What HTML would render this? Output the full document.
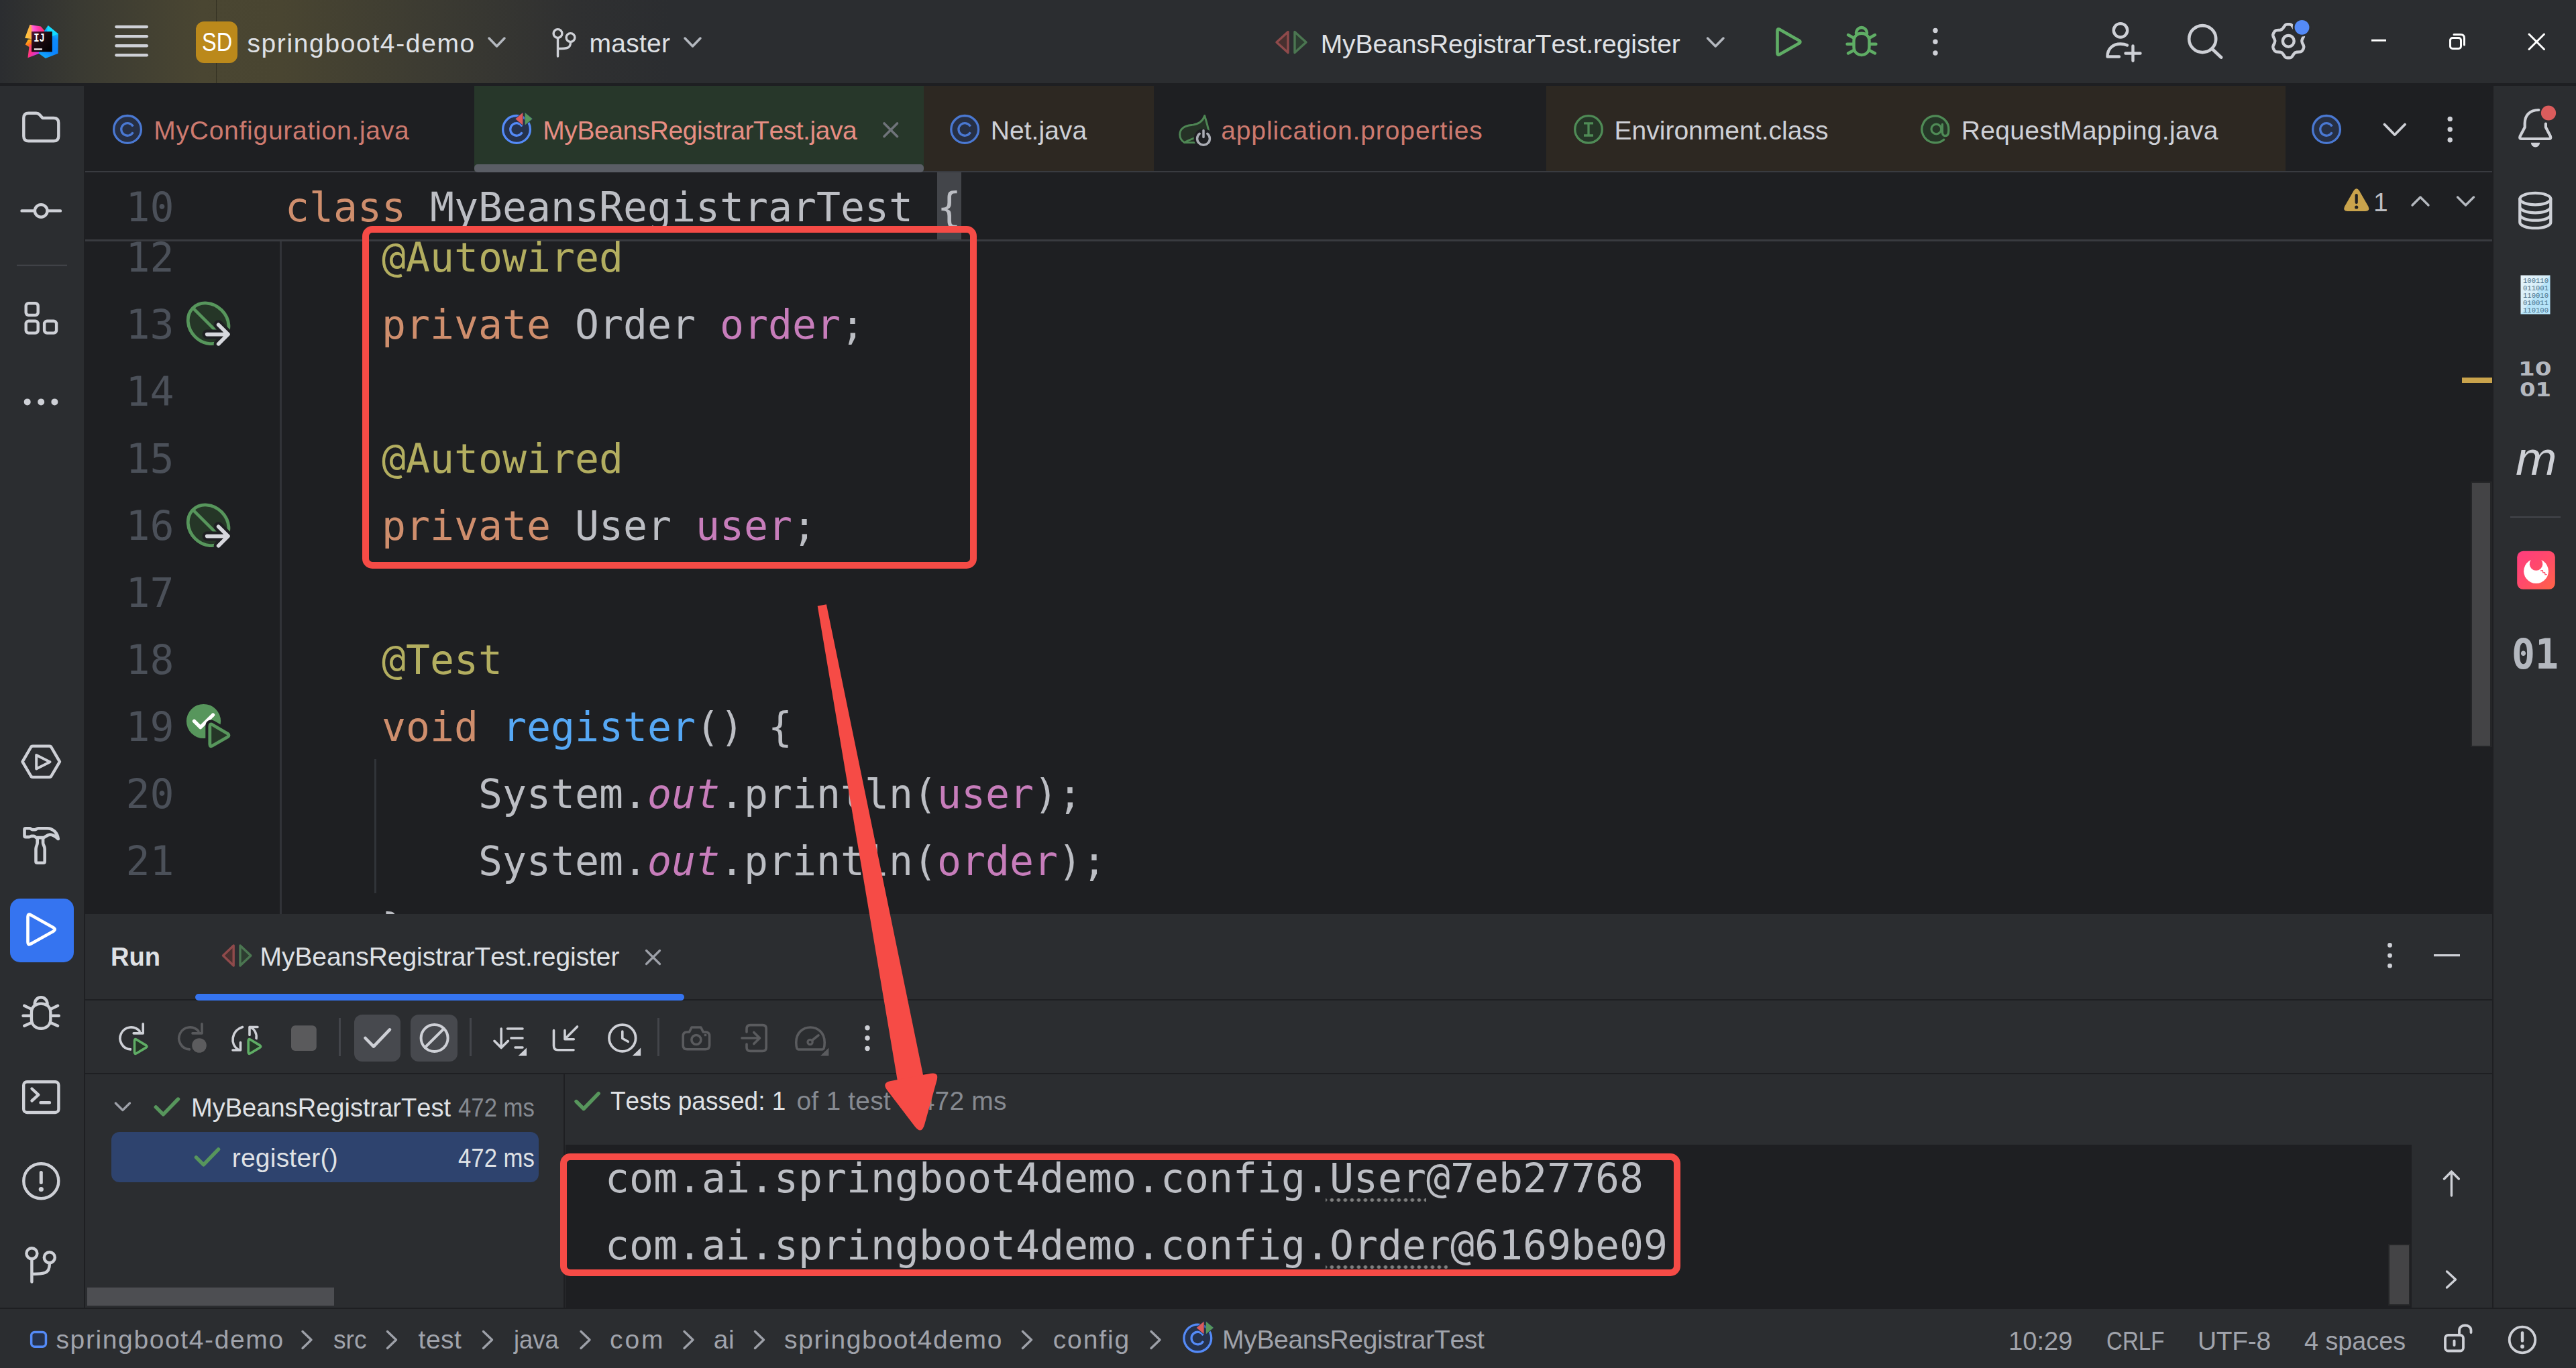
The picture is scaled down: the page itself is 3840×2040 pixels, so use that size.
<!DOCTYPE html>
<html lang="en"><head><meta charset="utf-8"><title>springboot4-demo – MyBeansRegistrarTest.java</title>
<style>
html,body{margin:0;padding:0}
body{width:3840px;height:2040px;position:relative;overflow:hidden;background:#1e1f22}
.r{position:absolute}
.i{position:absolute;overflow:visible}
.t{position:absolute;white-space:pre;line-height:1;font-kerning:none}

.cl{position:absolute;left:425px;height:100px;line-height:100px;white-space:pre;font-family:"DejaVu Sans Mono", "Liberation Mono", monospace;font-size:59.8px;color:#bcbec4;font-kerning:none}
.ln{position:absolute;left:115.5px;width:144px;text-align:right;height:100px;line-height:100px;white-space:pre;font-family:"DejaVu Sans Mono", "Liberation Mono", monospace;font-size:59.8px;color:#4b5059}
.k{color:#cf8e6d}.a{color:#b3ae60}.f{color:#c77dbb}.m{color:#56a8f5}.fi{color:#c77dbb;font-style:italic}
.clip{position:absolute;overflow:hidden}
</style></head>
<body>
<div class="r" style="left:0px;top:0px;width:3840px;height:124px;background:linear-gradient(90deg,#2b2d30 0px,#3a3a32 120px,#4a4632 300px,#494531 420px,#3c3b32 640px,#2f3031 860px,#2b2d30 1000px);"></div>
<div class="r" style="left:322px;top:0px;width:1px;height:124px;background:rgba(0,0,0,.28);"></div>
<div class="r" style="left:0px;top:128px;width:125px;height:1824px;background:#2b2d30;"></div>
<div class="r" style="left:3717px;top:128px;width:123px;height:1824px;background:#2b2d30;"></div>
<div class="r" style="left:126px;top:128px;width:581px;height:127.2px;background:#1e1f22;"></div>
<div class="r" style="left:707px;top:128px;width:670.3px;height:127.2px;background:#27372a;"></div>
<div class="r" style="left:1377px;top:128px;width:343px;height:127.2px;background:#2d2822;"></div>
<div class="r" style="left:1720px;top:128px;width:585px;height:127.2px;background:#1e1f22;"></div>
<div class="r" style="left:2305px;top:128px;width:1102px;height:127.2px;background:#2d2822;"></div>
<div class="r" style="left:3407px;top:128px;width:308px;height:127.2px;background:#1e1f22;"></div>
<div class="r" style="left:127px;top:255.2px;width:3588px;height:2px;background:#393b40;"></div>
<div class="r" style="left:707px;top:245px;width:670.3px;height:12.2px;background:#5a5d65;border-radius:5px"></div>
<div class="r" style="left:127px;top:357px;width:3588px;height:2.8px;background:#393b40;"></div>
<div class="r" style="left:1397px;top:257.2px;width:36px;height:100px;background:#43454a;"></div>
<div class="r" style="left:417px;top:359.8px;width:3px;height:1003.2px;background:#313338;"></div>
<div class="r" style="left:558px;top:1132px;width:3px;height:200px;background:#313439;"></div>
<div class="r" style="left:3683px;top:718px;width:31.6px;height:396px;background:#252628;"></div>
<div class="r" style="left:3685px;top:720px;width:27px;height:392px;background:#444446;"></div>
<div class="r" style="left:3670px;top:563px;width:45px;height:8px;background:#c9a34c;"></div>
<div class="r" style="left:126px;top:1363px;width:3589px;height:589px;background:#2b2d30;"></div>
<div class="r" style="left:126px;top:1490px;width:3589px;height:2.2px;background:#1e1f22;"></div>
<div class="r" style="left:126px;top:1600px;width:3589px;height:2.2px;background:#1e1f22;"></div>
<div class="r" style="left:840px;top:1602px;width:2.2px;height:350px;background:#1e1f22;"></div>
<div class="r" style="left:843px;top:1707px;width:2752px;height:244px;background:#1e1f22;"></div>
<div class="r" style="left:3559.5px;top:1855px;width:33px;height:92px;background:#252628;"></div>
<div class="r" style="left:3561.5px;top:1857px;width:29px;height:88px;background:#444446;"></div>
<div class="r" style="left:291px;top:1482px;width:729px;height:10px;background:#3574f0;border-radius:5px"></div>
<div class="r" style="left:527.6px;top:1512.5px;width:69.6px;height:70px;background:#47494e;border-radius:12px"></div>
<div class="r" style="left:612.4px;top:1512.5px;width:69.6px;height:70px;background:#47494e;border-radius:12px"></div>
<div class="r" style="left:505.2px;top:1518px;width:2.8px;height:57px;background:#43454a;"></div>
<div class="r" style="left:699.8px;top:1518px;width:2.8px;height:57px;background:#43454a;"></div>
<div class="r" style="left:979.9px;top:1518px;width:2.8px;height:57px;background:#43454a;"></div>
<div class="r" style="left:166px;top:1688px;width:637px;height:75px;background:#2e436e;border-radius:12px"></div>
<div class="r" style="left:130px;top:1920px;width:368px;height:27px;background:#4d4e52;"></div>
<div class="r" style="left:0px;top:1952px;width:3840px;height:88px;background:#2b2d30;"></div>
<div class="r" style="left:0px;top:1950px;width:3840px;height:2px;background:#1e1f22;"></div>
<div class="r" style="left:125px;top:128px;width:2px;height:1822px;background:#1e1f22;"></div>
<div class="r" style="left:3715px;top:128px;width:2px;height:1822px;background:#1e1f22;"></div>
<div class="r" style="left:1975.7px;top:1786.8px;width:150.6px;height:5.5px;background:radial-gradient(circle at 5px 2.75px,#808080 2.4px,rgba(128,128,128,0) 3.1px) -5.6px 0/10px 5.5px repeat-x;"></div>
<div class="r" style="left:1975.7px;top:1886.8px;width:182.5px;height:5.5px;background:radial-gradient(circle at 5px 2.75px,#808080 2.4px,rgba(128,128,128,0) 3.1px) -5.6px 0/10px 5.5px repeat-x;"></div>
<div class="clip" style="left:126px;top:359px;width:3559px;height:1004px"><div style="position:absolute;left:-126px;top:-359px">
<div class="ln" style="top:334.3px">12</div><div class="cl" style="top:334.3px">    <span class="a">@Autowired</span></div>
<div class="ln" style="top:434.3px">13</div><div class="cl" style="top:434.3px">    <span class="k">private</span> Order <span class="f">order</span>;</div>
<div class="ln" style="top:534.3px">14</div><div class="cl" style="top:534.3px"></div>
<div class="ln" style="top:634.3px">15</div><div class="cl" style="top:634.3px">    <span class="a">@Autowired</span></div>
<div class="ln" style="top:734.3px">16</div><div class="cl" style="top:734.3px">    <span class="k">private</span> User <span class="f">user</span>;</div>
<div class="ln" style="top:834.3px">17</div><div class="cl" style="top:834.3px"></div>
<div class="ln" style="top:934.3px">18</div><div class="cl" style="top:934.3px">    <span class="a">@Test</span></div>
<div class="ln" style="top:1034.3px">19</div><div class="cl" style="top:1034.3px">    <span class="k">void</span> <span class="m">register</span>() {</div>
<div class="ln" style="top:1134.3px">20</div><div class="cl" style="top:1134.3px">        System.<span class="fi">out</span>.println(<span class="f">user</span>);</div>
<div class="ln" style="top:1234.3px">21</div><div class="cl" style="top:1234.3px">        System.<span class="fi">out</span>.println(<span class="f">order</span>);</div>
<div class="cl" style="top:1334.3px">    }</div>
</div></div>
<div class="ln" style="top:259.3px">10</div><div class="cl" style="top:259.3px"><span class="k">class</span> MyBeansRegistrarTest {</div>
<div class="cl" style="left:902px;top:1707px">com.ai.springboot4demo.config.User@7eb27768</div>
<div class="cl" style="left:902px;top:1807px">com.ai.springboot4demo.config.Order@6169be09</div>

<svg class="i" style="left:0;top:0" width="3840" height="2040" viewBox="0 0 3840 2040" fill="none" stroke-linecap="round" stroke-linejoin="round">
<defs><linearGradient id="ij1" x1="0" y1="0.5" x2="1" y2="0.4"><stop offset="0" stop-color="#ffc83a"/><stop offset="0.3" stop-color="#ffb04a"/><stop offset="0.45" stop-color="#ff5ae0"/><stop offset="0.7" stop-color="#ff3aa8"/><stop offset="1" stop-color="#ff2d6e"/></linearGradient><linearGradient id="ij2" x1="0.2" y1="0" x2="0.6" y2="1"><stop offset="0" stop-color="#ffd21a"/><stop offset="0.5" stop-color="#ff7a1c"/><stop offset="1" stop-color="#ff5548"/></linearGradient><linearGradient id="ij3" x1="0" y1="0" x2="1" y2="0.6"><stop offset="0" stop-color="#ff5a4a"/><stop offset="0.5" stop-color="#ff2f8e"/><stop offset="1" stop-color="#c03cf0"/></linearGradient><linearGradient id="ij4" x1="0.7" y1="0" x2="0.4" y2="1"><stop offset="0" stop-color="#12e2ff"/><stop offset="0.35" stop-color="#0d8bfa"/><stop offset="0.75" stop-color="#0a84ff"/><stop offset="1" stop-color="#14a8fb"/></linearGradient><linearGradient id="ij5" x1="0" y1="0" x2="1" y2="1"><stop offset="0" stop-color="#5a1236"/><stop offset="0.45" stop-color="#1a0a10"/><stop offset="1" stop-color="#000000"/></linearGradient></defs>
<g stroke="none"><polygon points="44.5,36.8 61,39.6 66.3,45.8 60,60 37.1,56.7" fill="url(#ij1)"/><polygon points="41.8,59 50,58 50,74 37.7,66.6" fill="url(#ij2)"/><polygon points="44,66 58.5,70 58.5,79.7 41.4,86.2" fill="url(#ij3)"/><polygon points="66.3,45.8 71.6,38 86.8,50.5 86.5,79.7 67.9,87.1 57.9,79.7 60,60" fill="url(#ij4)"/><polygon points="71.6,38 86.8,50.5 78,54 70,47" fill="#14dcff"/><rect x="47" y="47" width="30.8" height="30.3" fill="url(#ij5)"/><rect x="50.8" y="72.2" width="12.1" height="2.5" fill="#ede4e6"/><text x="50.3" y="62.3" font-family="Liberation Mono, monospace" font-weight="700" font-size="17.5" fill="#fff" textLength="16.5" lengthAdjust="spacingAndGlyphs">IJ</text></g>
<path d="M173.5 40 H218.7" stroke="#ced0d6" stroke-width="4.6" fill="none" />
<path d="M173.5 54.2 H218.7" stroke="#ced0d6" stroke-width="4.6" fill="none" />
<path d="M173.5 68.3 H218.7" stroke="#ced0d6" stroke-width="4.6" fill="none" />
<path d="M173.5 82.3 H218.7" stroke="#ced0d6" stroke-width="4.6" fill="none" />
<defs><linearGradient id="sdg" x1="0" y1="0" x2="1" y2="1"><stop offset="0" stop-color="#b88a1c"/><stop offset="1" stop-color="#c0861a"/></linearGradient></defs>
<rect x="292" y="32" width="62" height="62" rx="12" fill="#bb891b" stroke="none"/>
<path d="M729 57 L740.5 69 L752 57" stroke="#b4b8bf" stroke-width="3.5" fill="none" />
<circle cx="831.5" cy="50" r="6.4" stroke="#ced0d6" stroke-width="3.4" fill="none" />
<circle cx="850.5" cy="56" r="6.4" stroke="#ced0d6" stroke-width="3.4" fill="none" />
<path d="M831.5 57 V84 M850.5 63 C850.5 72 846 72.5 831.5 72.5" stroke="#ced0d6" stroke-width="3.4" fill="none" />
<path d="M1021 57 L1032.5 69 L1044 57" stroke="#b4b8bf" stroke-width="3.5" fill="none" />
<path d="M1920 47.5 L1903 63 L1920 78.5 Z" stroke="#8f4a4b" stroke-width="3.4" fill="#48302f" />
<path d="M1930 47.5 L1947 63 L1930 78.5 Z" stroke="#4b7651" stroke-width="3.4" fill="#2d3d31" />
<path d="M2545.5 57 L2557.25 69 L2569 57" stroke="#b4b8bf" stroke-width="3.5" fill="none" />
<path d="M2649.5 46 V79 Q2649.5 83 2653 81 L2682 64.5 Q2685 62.5 2682 60.5 L2653 44 Q2649.5 42 2649.5 46 Z" stroke="#5fad65" stroke-width="4.6" fill="none" />
<path d="M2763.5 61 C2763.5 46 2786.5 46 2786.5 61 V70 C2786.5 86 2763.5 86 2763.5 70 Z" stroke="#5fad65" stroke-width="4.4" fill="none" />
<path d="M2767 50 C2767 38 2783 38 2783 50" stroke="#5fad65" stroke-width="4.4" fill="none" />
<path d="M2753.5 65.8 H2762 M2788 65.8 H2796.5 M2755 52 L2763 56.5 M2795 52 L2787 56.5 M2755 79.5 L2763.5 75 M2795 79.5 L2786.5 75" stroke="#5fad65" stroke-width="4.4" fill="none" />
<circle cx="2885" cy="45.5" r="3.7" fill="#ced0d6"/>
<circle cx="2885" cy="62.2" r="3.7" fill="#ced0d6"/>
<circle cx="2885" cy="79" r="3.7" fill="#ced0d6"/>
<circle cx="3161" cy="45.3" r="10.2" stroke="#ced0d6" stroke-width="4.4" fill="none" />
<path d="M3141.5 84.5 C3141.5 72 3150 65.5 3161 65.5 C3165 65.5 3168 66 3171 67.5 M3141.5 84.5 H3159" stroke="#ced0d6" stroke-width="4.4" fill="none" />
<path d="M3168.5 79.5 H3190.5 M3179.5 68.5 V90.5" stroke="#ced0d6" stroke-width="4.4" fill="none" />
<circle cx="3283.2" cy="58.1" r="20" stroke="#ced0d6" stroke-width="4.6" fill="none" />
<path d="M3298 73.3 L3311 85.5" stroke="#ced0d6" stroke-width="4.8" fill="none" />
<path d="M3416.8 38.3 Q3415.3 36.2 3412.7 36.2 L3409.9 36.2 Q3407.3 36.2 3405.8 38.3 L3403.1 42.3 Q3401.6 44.4 3399.0 44.7 L3394.2 45.1 Q3391.6 45.3 3390.3 47.5 L3388.9 49.9 Q3387.6 52.1 3388.7 54.5 L3390.8 58.9 Q3391.9 61.2 3390.8 63.6 L3388.7 68.0 Q3387.6 70.4 3388.9 72.6 L3390.3 75.0 Q3391.6 77.2 3394.2 77.4 L3399.0 77.8 Q3401.6 78.1 3403.1 80.2 L3405.8 84.2 Q3407.3 86.3 3409.9 86.3 L3412.7 86.3 Q3415.3 86.3 3416.8 84.2 L3419.5 80.2 Q3421.0 78.1 3423.6 77.8 L3428.4 77.4 Q3431.0 77.2 3432.3 75.0 L3433.7 72.6 Q3435.0 70.4 3433.9 68.0 L3431.8 63.6 Q3430.7 61.3 3431.8 58.9 L3433.9 54.5 Q3435.0 52.1 3433.7 49.9 L3432.3 47.5 Q3431.0 45.3 3428.4 45.1 L3423.6 44.7 Q3421.0 44.4 3419.5 42.3 Z" stroke="#ced0d6" stroke-width="4.4" fill="none" />
<circle cx="3411.3" cy="61.3" r="8.4" stroke="#ced0d6" stroke-width="4.4" fill="none" />
<circle cx="3431.5" cy="40.8" r="13.8" fill="#2b2d30"/><circle cx="3431.5" cy="40.8" r="10.9" fill="#548af7"/>
<path d="M3535 60.2 H3557" stroke="#ffffff" stroke-width="3" fill="none" stroke-linecap="butt"/>
<rect x="3652.5" y="56.5" width="16" height="16" rx="3.5" stroke="#fff" stroke-width="3"/>
<path d="M3658 51.5 H3668 Q3673.5 51.5 3673.5 57 V67" stroke="#ffffff" stroke-width="3" fill="none" />
<path d="M3770 51 L3792.5 73.5 M3792.5 51 L3770 73.5" stroke="#ffffff" stroke-width="3" fill="none" />
<circle cx="190" cy="192.9" r="20.4" stroke="#4a78d2" stroke-width="3.3" fill="#262f44" />
<path d="M198.3 188.6 A9.3 9.3 0 1 0 198.3 197.20000000000002" stroke="#4a78d2" stroke-width="3.3" fill="none" stroke-linecap="butt"/>
<circle cx="770" cy="192.9" r="20.4" stroke="#548af7" stroke-width="3.3" fill="#25324d" />
<path d="M778.3 188.6 A9.3 9.3 0 1 0 778.3 197.20000000000002" stroke="#548af7" stroke-width="3.3" fill="none" stroke-linecap="butt"/>
<path d="M779.3 168.0 L768.3 177.3 L779.3 186.5 Z" fill="#db5c5c" stroke="#25324d" stroke-width="1.6" stroke-linejoin="miter"/>
<path d="M782.6 168.0 L793.6 177.3 L782.6 186.5 Z" fill="#57965c" stroke="#25324d" stroke-width="1.6" stroke-linejoin="miter"/>
<path d="M779.3 168.0 L768.3 177.3 L779.3 186.5 Z" fill="#db5c5c"/>
<path d="M782.6 168.0 L793.6 177.3 L782.6 186.5 Z" fill="#57965c"/>
<circle cx="1438.2" cy="192.9" r="20.4" stroke="#4a78d2" stroke-width="3.3" fill="#262f44" />
<path d="M1446.5 188.6 A9.3 9.3 0 1 0 1446.5 197.20000000000002" stroke="#4a78d2" stroke-width="3.3" fill="none" stroke-linecap="butt"/>
<circle cx="3468" cy="192.9" r="20.4" stroke="#4a78d2" stroke-width="3.3" fill="#262f44" />
<path d="M3476.3 188.6 A9.3 9.3 0 1 0 3476.3 197.20000000000002" stroke="#4a78d2" stroke-width="3.3" fill="none" stroke-linecap="butt"/>
<path d="M1318 184 L1337.5 203.5 M1337.5 184 L1318 203.5" stroke="#6f737a" stroke-width="3.6" fill="none" />
<path d="M1795.7 172.5 C1793 181 1786 185.5 1776 186.5 C1766 187.5 1758.7 192 1758.7 200.5 C1758.7 206 1761.5 210 1765.5 212.5 H1790 L1801.8 195 C1800.5 188 1798 180 1795.7 172.5 Z" fill="#253226"/>
<path d="M1783 212.6 H1765.5 C1761.5 210 1758.7 206 1758.7 200.5 C1758.7 192 1766 187.5 1776 186.5 C1786 185.5 1793 181 1795.7 172.5 C1798 180 1800.5 188 1801.8 195.5 M1765.5 212.5 C1770 210 1775 207.8 1780.5 205.8" stroke="#4e8654" stroke-width="2.9" fill="none" />
<circle cx="1794" cy="206.3" r="14.3" fill="#1e1f22"/>
<path d="M1788.2 199.4 A9.4 9.4 0 1 0 1799.8 199.4 M1794 194.6 V204.4" stroke="#aaacb4" stroke-width="3.5" fill="none" />
<circle cx="2368" cy="192.9" r="20.3" stroke="#4f8b56" stroke-width="3.3" fill="#253627" />
<path d="M2361 183.8 H2375 M2368 183.8 V202 M2361 202 H2375" stroke="#4f8b56" stroke-width="3.3" fill="none" stroke-linecap="butt"/>
<circle cx="2884.8" cy="192.9" r="20" fill="#253627"/>
<path d="M2897.7000000000003 208.20000000000002 A20 20 0 1 1 2904.8 194.4 C2904.8 199.9 2902.6000000000004 202.5 2900.0 202.5 C2897.0 202.5 2895.4 200.4 2895.4 196.9 V185.3" stroke="#4f8b56" stroke-width="3.3" fill="none" />
<circle cx="2886.4" cy="192.5" r="7.4" stroke="#4f8b56" stroke-width="3.2" fill="none" />
<path d="M3554.5 185.5 L3569.75 201 L3585 185.5" stroke="#ced0d6" stroke-width="3.8" fill="none" />
<circle cx="3652.2" cy="177.4" r="3.7" fill="#ced0d6"/>
<circle cx="3652.2" cy="193" r="3.7" fill="#ced0d6"/>
<circle cx="3652.2" cy="208.7" r="3.7" fill="#ced0d6"/>
<path d="M3508.5 284.5 Q3512.7 278 3517 284.5 L3530.5 308 Q3533.5 315 3526 315 H3499.5 Q3492 315 3495 308 Z" fill="#c9a34c" stroke="none"/>
<path d="M3512.7 291 V302" stroke="#1e1f22" stroke-width="4.2" fill="none" />
<circle cx="3512.7" cy="309" r="2.6" fill="#1e1f22"/>
<path d="M3596 306 L3608 294 L3620 306" stroke="#b4b8bf" stroke-width="3.4" fill="none" />
<path d="M3663.5 294 L3675.5 306 L3687.5 294" stroke="#b4b8bf" stroke-width="3.4" fill="none" />
<path d="M35.3 176 Q35.3 168.7 42.6 168.7 H54 Q57 168.7 59 171 L63.5 176 H80 Q87.3 176 87.3 183.3 V203 Q87.3 210.3 80 210.3 H42.6 Q35.3 210.3 35.3 203 Z" stroke="#ced0d6" stroke-width="4.4" fill="none" />
<circle cx="61.2" cy="314.4" r="9.3" stroke="#ced0d6" stroke-width="4.4" fill="none" />
<path d="M32.5 314.4 H51.5 M71 314.4 H90" stroke="#ced0d6" stroke-width="4.4" fill="none" />
<rect x="25" y="394.7" width="75" height="2" fill="#43454a"/>
<rect x="38.7" y="452.2" width="18" height="17.8" rx="4" stroke="#ced0d6" stroke-width="4.4"/>
<rect x="38.7" y="478.8" width="18" height="17.8" rx="4" stroke="#ced0d6" stroke-width="4.4"/>
<rect x="66.1" y="478.8" width="18" height="17.8" rx="4" stroke="#ced0d6" stroke-width="4.4"/>
<circle cx="40.7" cy="599.4" r="5" fill="#ced0d6"/>
<circle cx="61.2" cy="599.4" r="5" fill="#ced0d6"/>
<circle cx="81.4" cy="599.4" r="5" fill="#ced0d6"/>
<path d="M33.5 1135.8 L46.5 1113.5 Q47.5 1112.6 49 1112.6 H73.5 Q75 1112.6 76 1113.5 L89 1135.8 L76 1158 Q75 1158.9 73.5 1158.9 H49 Q47.5 1158.9 46.5 1158 Z" stroke="#ced0d6" stroke-width="4.4" fill="none" />
<path d="M54.2 1126 V1146.5 L74.5 1136.2 Z" stroke="#ced0d6" stroke-width="4" fill="none" />
<path d="M36.5 1237 Q36.5 1235.3 38.2 1235.3 H44 C46 1235.3 46.5 1237.2 48.5 1237.2 H52 C54 1237.2 54.5 1235.2 57 1235.2 H70.5 C79 1235.2 85.5 1242 86.8 1251 C82 1246.5 78 1244.6 74.5 1244.6 C70 1244.6 67.5 1249.1 64.5 1249.1 H54.5 C52.5 1249.1 52.5 1246.9 50.5 1246.9 H47 C45.5 1246.9 45.5 1248.1 43.5 1248.1 H38.2 Q36.5 1248.1 36.5 1246.4 Z" stroke="#ced0d6" stroke-width="4.6" fill="none" />
<path d="M55.7 1249.5 V1257 C55.7 1260 53.5 1262 53.5 1266 V1284.5 Q53.5 1286.8 55.8 1286.8 H64.4 Q66.7 1286.8 66.7 1284.5 V1266 C66.7 1262 64.1 1260 64.1 1257 V1249.5" stroke="#ced0d6" stroke-width="4.6" fill="none" />
<rect x="15" y="1340" width="95" height="95" rx="15" fill="#3574f0"/>
<path d="M41.5 1367 V1405 Q41.5 1410 46 1407.5 L80 1388.5 Q83.5 1386 80 1383.5 L46 1364.5 Q41.5 1362 41.5 1367 Z" stroke="#ffffff" stroke-width="4.6" fill="none" />
<path d="M46.93 1509.45 C46.93 1492.33 75.37 1492.33 75.37 1509.45 V1520.15 C75.37 1538.34 46.93 1538.34 46.93 1520.15 Z" stroke="#ced0d6" stroke-width="4.4" fill="none" />
<path d="M51.67 1497.68 C51.67 1483.77 70.63 1483.77 70.63 1497.68" stroke="#ced0d6" stroke-width="4.4" fill="none" />
<path d="M34.49 1514.8 H45.15 M77.15 1514.8 H87.81 M36.27 1499.82 L46.34 1504.63 M86.03 1499.82 L75.96 1504.63 M36.27 1529.78 L46.93 1524.96 M86.03 1529.78 L75.37 1524.96" stroke="#ced0d6" stroke-width="4.4" fill="none" />
<rect x="35.2" y="1613.2" width="52.2" height="45.8" rx="5" stroke="#ced0d6" stroke-width="4.4"/>
<path d="M47.5 1623.5 L57.3 1632.7 L47.5 1641.5 M60.5 1644.3 H74" stroke="#ced0d6" stroke-width="4.4" fill="none" />
<circle cx="61.3" cy="1761.2" r="26" stroke="#ced0d6" stroke-width="4.4" fill="none" />
<path d="M61.3 1748.5 V1763.5" stroke="#ced0d6" stroke-width="5" fill="none" />
<circle cx="61.3" cy="1773.5" r="3.6" fill="#ced0d6"/>
<circle cx="47.4" cy="1869.2" r="8" stroke="#ced0d6" stroke-width="4.4" fill="none" />
<circle cx="73.8" cy="1875.2" r="8" stroke="#ced0d6" stroke-width="4.4" fill="none" />
<path d="M47.4 1879.5 V1911.5 M73.8 1885.5 C73.8 1899 66 1900 47.4 1900" stroke="#ced0d6" stroke-width="4.4" fill="none" />
<path d="M3784.3 164 C3771 164 3763.7 172 3763.7 184 V189.7 L3756.6 203.3 Q3755 207 3759 207 H3799.5 Q3803.5 207 3801.9 203.3 L3794.9 189.7 V184.5" stroke="#ced0d6" stroke-width="4.2" fill="none" />
<path d="M3772.8 212.7 H3786.2 A6.7 6.7 0 0 1 3772.8 212.7 Z" fill="#ced0d6"/>
<circle cx="3799" cy="168.5" r="11.1" fill="#db5c5c"/>
<ellipse cx="3779.3" cy="296.6" rx="23" ry="8.7" stroke="#ced0d6" stroke-width="4.3"/>
<path d="M3756.3 296.6 V331.5 M3802.3 296.6 V331.5 M3756.3 308.6 A23 8.7 0 0 0 3802.3 308.6 M3756.3 320 A23 8.7 0 0 0 3802.3 320 M3756.3 331.5 A23 8.7 0 0 0 3802.3 331.5" stroke="#ced0d6" stroke-width="4.3" fill="none" />
<defs><linearGradient id="bg1" x1="0" y1="0" x2="1" y2="1"><stop offset="0" stop-color="#e9f5fb"/><stop offset="0.5" stop-color="#d3ecf8"/><stop offset="0.5" stop-color="#b7e4f9"/><stop offset="1" stop-color="#b7e4f9"/></linearGradient></defs>
<rect x="3757.5" y="410.5" width="44" height="58" fill="url(#bg1)"/>
<text x="3761" y="422" font-family="Liberation Mono, monospace" font-size="10.5" textLength="38" lengthAdjust="spacingAndGlyphs" fill="#4a6f86">100110</text>
<text x="3761" y="433" font-family="Liberation Mono, monospace" font-size="10.5" textLength="38" lengthAdjust="spacingAndGlyphs" fill="#4a6f86">011001</text>
<text x="3761" y="444" font-family="Liberation Mono, monospace" font-size="10.5" textLength="38" lengthAdjust="spacingAndGlyphs" fill="#4a6f86">110010</text>
<text x="3761" y="455" font-family="Liberation Mono, monospace" font-size="10.5" textLength="38" lengthAdjust="spacingAndGlyphs" fill="#4a6f86">010011</text>
<text x="3761" y="466" font-family="Liberation Mono, monospace" font-size="10.5" textLength="38" lengthAdjust="spacingAndGlyphs" fill="#4a6f86">110100</text>
<rect x="3742" y="770" width="75" height="2" fill="#43454a"/>
<defs><linearGradient id="pk" x1="0" y1="0" x2="1" y2="1"><stop offset="0" stop-color="#ff3c7f"/><stop offset="0.5" stop-color="#ff4a6a"/><stop offset="1" stop-color="#ff6446"/></linearGradient></defs>
<rect x="3752.2" y="821.8" width="56.6" height="57" rx="9" fill="url(#pk)"/>
<path d="M3772.8 835 A18.4 18.4 0 1 0 3788.3 835 A9.8 9.8 0 1 1 3772.8 835 Z" fill="#ffffff"/>
<path d="M3787.6 851 l2.7 -0.3 l0.5 3.2 l2.7 -0.3 l0.5 3.2 l2.4 -0.2" stroke="#ff5068" stroke-width="1.3" fill="none"/>
<path d="M3654.4 1783 V1747 M3643.5 1758 L3654.4 1747 L3665.3 1758" stroke="#ced0d6" stroke-width="3.4" fill="none" />
<path d="M3647.5 1896 L3660.5 1908.0 L3647.5 1920" stroke="#ced0d6" stroke-width="3.4" fill="none" />
<circle cx="3562.5" cy="1409.5" r="3.4" fill="#ced0d6"/>
<circle cx="3562.5" cy="1424.8" r="3.4" fill="#ced0d6"/>
<circle cx="3562.5" cy="1440.2" r="3.4" fill="#ced0d6"/>
<path d="M3628 1424.6 H3667" stroke="#ced0d6" stroke-width="3.2" fill="none" stroke-linecap="butt"/>
<g transform="rotate(45 310.6 482.3)"><ellipse cx="310.6" cy="482.3" rx="32.5" ry="28" fill="#253627" stroke="#57965c" stroke-width="4.8"/><path d="M279.6 482.3 H330.6" stroke="#57965c" stroke-width="4.6"/></g>
<path d="M308.6 498.6 H339.6 M325.6 484.3 L340.0 498.6 L325.6 512.9" stroke="#1e1f22" stroke-width="14" fill="none" />
<path d="M308.6 498.6 H339.6 M325.6 484.3 L340.0 498.6 L325.6 512.9" stroke="#d7d8de" stroke-width="5.6" fill="none" />
<g transform="rotate(45 310.6 783.3)"><ellipse cx="310.6" cy="783.3" rx="32.5" ry="28" fill="#253627" stroke="#57965c" stroke-width="4.8"/><path d="M279.6 783.3 H330.6" stroke="#57965c" stroke-width="4.6"/></g>
<path d="M308.6 799.5999999999999 H339.6 M325.6 785.3 L340.0 799.5999999999999 L325.6 813.8999999999999" stroke="#1e1f22" stroke-width="14" fill="none" />
<path d="M308.6 799.5999999999999 H339.6 M325.6 785.3 L340.0 799.5999999999999 L325.6 813.8999999999999" stroke="#d7d8de" stroke-width="5.6" fill="none" />
<circle cx="303.5" cy="1075.5" r="25.6" fill="#57965c"/>
<path d="M289.5 1075.3 L298.8 1084.6 L317.5 1066.2" stroke="#ffffff" stroke-width="5.4" fill="none" />
<path d="M312.8 1083 V1109.8 Q312.8 1114.2 316.7 1112 L339.3 1099 Q342.8 1096.5 339.3 1094 L316.7 1080.8 Q312.8 1078.5 312.8 1083 Z" stroke="#1e1f22" stroke-width="13" fill="none" />
<path d="M312.8 1083 V1109.8 Q312.8 1114.2 316.7 1112 L339.3 1099 Q342.8 1096.5 339.3 1094 L316.7 1080.8 Q312.8 1078.5 312.8 1083 Z" stroke="#57965c" stroke-width="4.8" fill="#253627" />
<path d="M348.2 1410 L332.5 1425 L348.2 1440 Z" stroke="#8f4a4b" stroke-width="3.4" fill="#48302f" />
<path d="M358 1410 L373.9 1425 L358 1440 Z" stroke="#4b7651" stroke-width="3.4" fill="#2d3d31" />
<path d="M963.5 1417.5 L983.5 1437.5 M983.5 1417.5 L963.5 1437.5" stroke="#9da0a8" stroke-width="3.2" fill="none" />
<path d="M194.7 1564.9 A16.5 16.5 0 1 1 208.2 1537.9" stroke="#ced0d6" stroke-width="3.6" fill="none" />
<path d="M199.2 1540.9 H213.2 V1526.9" stroke="#ced0d6" stroke-width="3.6" fill="none" />
<path d="M200.5 1552.0 V1569.0 Q200.5 1572.5 203.5 1570.8 L217.8 1562.1 Q220.1 1560.5 217.8 1558.9 L203.5 1550.2 Q200.5 1548.5 200.5 1552.0 Z" stroke="#2b2d30" stroke-width="9" fill="none" />
<path d="M200.5 1552.0 V1569.0 Q200.5 1572.5 203.5 1570.8 L217.8 1562.1 Q220.1 1560.5 217.8 1558.9 L203.5 1550.2 Q200.5 1548.5 200.5 1552.0 Z" stroke="#5fad65" stroke-width="3.6" fill="#253627" />
<path d="M282.5 1564.9 A16.5 16.5 0 1 1 296 1537.9" stroke="#58595c" stroke-width="3.6" fill="none" />
<path d="M287 1540.9 H301 V1526.9" stroke="#58595c" stroke-width="3.6" fill="none" />
<circle cx="297" cy="1559" r="13.5" fill="#2b2d30"/><circle cx="297" cy="1559" r="10.8" fill="#5c5c5e"/>
<path d="M361.5 1531.5 C345 1537 342 1557 355.5 1565.5 M347 1566 H358.5 V1554.5" stroke="#ced0d6" stroke-width="3.6" fill="none" />
<path d="M382 1549 C383 1542 380 1535 373 1531.5 M372 1543.5 V1531.5 H384" stroke="#ced0d6" stroke-width="3.6" fill="none" />
<path d="M370.2 1552.0 V1569.0 Q370.2 1572.5 373.2 1570.8 L387.5 1562.1 Q389.8 1560.5 387.5 1558.9 L373.2 1550.2 Q370.2 1548.5 370.2 1552.0 Z" stroke="#2b2d30" stroke-width="9" fill="none" />
<path d="M370.2 1552.0 V1569.0 Q370.2 1572.5 373.2 1570.8 L387.5 1562.1 Q389.8 1560.5 387.5 1558.9 L373.2 1550.2 Q370.2 1548.5 370.2 1552.0 Z" stroke="#5fad65" stroke-width="3.6" fill="#253627" />
<rect x="434" y="1529.3" width="37.8" height="37.8" rx="6" fill="#5a5a5c"/>
<path d="M544.5 1548 L556.9 1560.6 L581 1535.4" stroke="#ced0d6" stroke-width="4.6" fill="none" />
<circle cx="647.6" cy="1548" r="20" stroke="#ced0d6" stroke-width="4" fill="none" />
<path d="M633.5 1562 L661.7 1534" stroke="#ced0d6" stroke-width="4" fill="none" />
<path d="M747.2 1534 V1562 M737 1552.3 L747.2 1562.5 L757.4 1552.3 M756.5 1534 H779 M762 1548 H779 M768 1562 H779" stroke="#ced0d6" stroke-width="3.6" fill="none" />
<path d="M772.5 1574.5 H785 V1562.5 Z" fill="#ced0d6"/>
<path d="M825.5 1536.5 V1559.5 Q825.5 1565.8 831.8 1565.8 H855" stroke="#ced0d6" stroke-width="3.6" fill="none" />
<path d="M860.5 1531 L842 1549.5 M842 1536.5 V1549.7 H855.3" stroke="#ced0d6" stroke-width="3.6" fill="none" />
<circle cx="927.8" cy="1548" r="19.8" stroke="#ced0d6" stroke-width="3.8" fill="none" />
<path d="M927.8 1538 V1548.5 L936.3 1553.3" stroke="#ced0d6" stroke-width="3.6" fill="none" />
<path d="M942.7 1574.5 H955.2 V1562.5 Z" fill="#ced0d6"/>
<path d="M1018.2 1545 Q1018.2 1539 1024.2 1539 H1027.5 L1031 1532 H1044.8 L1048.3 1539 H1051.6 Q1057.6 1539 1057.6 1545 V1558.7 Q1057.6 1564.7 1051.6 1564.7 H1024.2 Q1018.2 1564.7 1018.2 1558.7 Z" stroke="#5a5b5e" stroke-width="3.6" fill="none" />
<circle cx="1037.9" cy="1550.5" r="7" stroke="#5a5b5e" stroke-width="3.6" fill="none" />
<rect x="1049.8" y="1541.8" width="3.4" height="3.4" fill="#5a5b5e"/>
<path d="M1113 1539 V1534 Q1113 1528.6 1118.4 1528.6 H1136.8 Q1142.2 1528.6 1142.2 1534 V1562 Q1142.2 1567.4 1136.8 1567.4 H1118.4 Q1113 1567.4 1113 1562 V1557" stroke="#5a5b5e" stroke-width="3.6" fill="none" />
<path d="M1106 1548 H1132.5 M1123.8 1539.5 L1132.5 1548 L1123.8 1556.5" stroke="#5a5b5e" stroke-width="3.6" fill="none" />
<path d="M1190 1565 Q1186.8 1565 1186.8 1554.5 C1186.8 1524.5 1229.2 1524.5 1229.2 1554.5 Q1229.2 1565 1226 1565 Z" stroke="#5a5b5e" stroke-width="3.6" fill="none" />
<circle cx="1207.6" cy="1554" r="3.6" stroke="#5a5b5e" stroke-width="3.2" fill="none" />
<path d="M1210.5 1551.5 L1220 1543.8" stroke="#5a5b5e" stroke-width="3.6" fill="none" />
<path d="M1223 1574.5 H1235.4 V1562.5 Z" fill="#5a5b5e"/>
<circle cx="1293" cy="1532.8" r="3.7" fill="#ced0d6"/>
<circle cx="1293" cy="1548" r="3.7" fill="#ced0d6"/>
<circle cx="1293" cy="1563.5" r="3.7" fill="#ced0d6"/>
<path d="M172.3 1645 L182.9 1655.5 L193.5 1645" stroke="#9da0a8" stroke-width="3.3" fill="none" />
<path d="M232.3 1650.9 L243.3 1661.9 L265.5 1639.0" stroke="#57965c" stroke-width="5.4" fill="none" />
<path d="M292.4 1725.8 L303.4 1736.8 L325.59999999999997 1713.8999999999999" stroke="#57965c" stroke-width="5.4" fill="none" />
<path d="M859 1642.5 L870 1653.5 L892.2 1630.6" stroke="#57965c" stroke-width="5.4" fill="none" />
<rect x="46.65" y="1986.45" width="21.8" height="21.8" rx="5" fill="#25324d" stroke="#548af7" stroke-width="3.5"/>
<path d="M451 1985.5 L464 1998.0 L451 2010.5" stroke="#9da0a8" stroke-width="3.4" fill="none" />
<path d="M577.5 1985.5 L590.5 1998.0 L577.5 2010.5" stroke="#9da0a8" stroke-width="3.4" fill="none" />
<path d="M720.5 1985.5 L733.5 1998.0 L720.5 2010.5" stroke="#9da0a8" stroke-width="3.4" fill="none" />
<path d="M866 1985.5 L879 1998.0 L866 2010.5" stroke="#9da0a8" stroke-width="3.4" fill="none" />
<path d="M1020 1985.5 L1033 1998.0 L1020 2010.5" stroke="#9da0a8" stroke-width="3.4" fill="none" />
<path d="M1125.5 1985.5 L1138.5 1998.0 L1125.5 2010.5" stroke="#9da0a8" stroke-width="3.4" fill="none" />
<path d="M1524.5 1985.5 L1537.5 1998.0 L1524.5 2010.5" stroke="#9da0a8" stroke-width="3.4" fill="none" />
<path d="M1716 1985.5 L1729 1998.0 L1716 2010.5" stroke="#9da0a8" stroke-width="3.4" fill="none" />
<circle cx="1785.3" cy="1995.6" r="20.4" stroke="#548af7" stroke-width="3.3" fill="#25324d" />
<path d="M1793.6 1991.3 A9.3 9.3 0 1 0 1793.6 1999.8999999999999" stroke="#548af7" stroke-width="3.3" fill="none" stroke-linecap="butt"/>
<path d="M1794.6 1970.6999999999998 L1783.6 1980.0 L1794.6 1989.1999999999998 Z" fill="#db5c5c" stroke="#25324d" stroke-width="1.6" stroke-linejoin="miter"/>
<path d="M1797.8999999999999 1970.6999999999998 L1808.8999999999999 1980.0 L1797.8999999999999 1989.1999999999998 Z" fill="#57965c" stroke="#25324d" stroke-width="1.6" stroke-linejoin="miter"/>
<path d="M1794.6 1970.6999999999998 L1783.6 1980.0 L1794.6 1989.1999999999998 Z" fill="#db5c5c"/>
<path d="M1797.8999999999999 1970.6999999999998 L1808.8999999999999 1980.0 L1797.8999999999999 1989.1999999999998 Z" fill="#57965c"/>
<rect x="3645" y="1991" width="27" height="23.5" rx="4.5" stroke="#ced0d6" stroke-width="3.8"/>
<path d="M3666 1991 V1984 C3666 1974 3683.5 1974 3683.5 1984 V1987" stroke="#ced0d6" stroke-width="3.8" fill="none" />
<path d="M3658.5 1999.5 V2006" stroke="#ced0d6" stroke-width="4" fill="none" />
<circle cx="3760" cy="1998" r="19.3" stroke="#ced0d6" stroke-width="3.8" fill="none" />
<path d="M3760 1987.5 V1999.5" stroke="#ced0d6" stroke-width="4.4" fill="none" />
<circle cx="3760" cy="2008" r="2.9" fill="#ced0d6"/>
</svg>
<span class="t" style="font-family:'Liberation Sans', sans-serif;font-size:39px;color:#ffffff;font-weight:400;letter-spacing:0.000px;left:301.17px;top:43.00px;transform:scaleX(0.8325);transform-origin:0 0;">SD</span>
<span class="t" style="font-family:'Liberation Sans', sans-serif;font-size:39px;color:#dfe1e5;font-weight:400;letter-spacing:1.635px;left:368.40px;top:45.00px;">springboot4-demo</span>
<span class="t" style="font-family:'Liberation Sans', sans-serif;font-size:39px;color:#dfe1e5;font-weight:400;letter-spacing:0.299px;left:878.40px;top:45.20px;">master</span>
<span class="t" style="font-family:'Liberation Sans', sans-serif;font-size:39px;color:#dfe1e5;font-weight:400;letter-spacing:-0.051px;left:1968.70px;top:45.50px;">MyBeansRegistrarTest.register</span>
<span class="t" style="font-family:'Liberation Sans', sans-serif;font-size:39px;color:#cd7a6f;font-weight:400;letter-spacing:0.739px;left:229.30px;top:175.00px;">MyConfiguration.java</span>
<span class="t" style="font-family:'Liberation Sans', sans-serif;font-size:39px;color:#e68e83;font-weight:400;letter-spacing:-0.442px;left:809.30px;top:175.00px;">MyBeansRegistrarTest.java</span>
<span class="t" style="font-family:'Liberation Sans', sans-serif;font-size:39px;color:#ced0d6;font-weight:400;letter-spacing:0.031px;left:1476.80px;top:175.00px;">Net.java</span>
<span class="t" style="font-family:'Liberation Sans', sans-serif;font-size:39px;color:#cd7a6f;font-weight:400;letter-spacing:0.899px;left:1820.20px;top:175.00px;">application.properties</span>
<span class="t" style="font-family:'Liberation Sans', sans-serif;font-size:39px;color:#ced0d6;font-weight:400;letter-spacing:0.030px;left:2406.40px;top:175.00px;">Environment.class</span>
<span class="t" style="font-family:'Liberation Sans', sans-serif;font-size:39px;color:#ced0d6;font-weight:400;letter-spacing:0.308px;left:2923.70px;top:175.00px;">RequestMapping.java</span>
<span class="t" style="font-family:'Liberation Sans', sans-serif;font-size:39px;color:#bcbec4;font-weight:400;letter-spacing:0.000px;left:3538.00px;top:281.50px;">1</span>
<span class="t" style="font-family:'Liberation Sans', sans-serif;font-size:39px;color:#dfe1e5;font-weight:700;letter-spacing:0.000px;left:165.44px;top:1406.70px;transform:scaleX(0.9780);transform-origin:0 0;">Run</span>
<span class="t" style="font-family:'Liberation Sans', sans-serif;font-size:39px;color:#dfe1e5;font-weight:400;letter-spacing:-0.054px;left:387.50px;top:1406.70px;">MyBeansRegistrarTest.register</span>
<span class="t" style="font-family:'Liberation Sans', sans-serif;font-size:39px;color:#dfe1e5;font-weight:400;letter-spacing:0.000px;left:284.57px;top:1632.00px;transform:scaleX(0.9759);transform-origin:0 0;">MyBeansRegistrarTest</span>
<span class="t" style="font-family:'Liberation Sans', sans-serif;font-size:39px;color:#868a91;font-weight:400;letter-spacing:0.000px;left:683.00px;top:1632.00px;transform:scaleX(0.8909);transform-origin:0 0;">472 ms</span>
<span class="t" style="font-family:'Liberation Sans', sans-serif;font-size:39px;color:#dfe1e5;font-weight:400;letter-spacing:0.230px;left:345.70px;top:1707.00px;">register()</span>
<span class="t" style="font-family:'Liberation Sans', sans-serif;font-size:39px;color:#dfe1e5;font-weight:400;letter-spacing:0.000px;left:683.00px;top:1707.00px;transform:scaleX(0.8909);transform-origin:0 0;">472 ms</span>
<span class="t" style="font-family:'Liberation Sans', sans-serif;font-size:39px;color:#dfe1e5;font-weight:400;letter-spacing:0.000px;left:910.30px;top:1622.20px;transform:scaleX(0.9491);transform-origin:0 0;">Tests passed: 1</span>
<span class="t" style="font-family:'Liberation Sans', sans-serif;font-size:39px;color:#868a91;font-weight:400;letter-spacing:0.176px;left:1187.50px;top:1622.20px;">of 1 test – 472 ms</span>
<span class="t" style="font-family:'Liberation Sans', sans-serif;font-size:39px;color:#a0a3ab;font-weight:400;letter-spacing:1.615px;left:83.50px;top:1977.70px;">springboot4-demo</span>
<span class="t" style="font-family:'Liberation Sans', sans-serif;font-size:39px;color:#a0a3ab;font-weight:400;letter-spacing:0.000px;left:497.45px;top:1977.70px;transform:scaleX(0.9547);transform-origin:0 0;">src</span>
<span class="t" style="font-family:'Liberation Sans', sans-serif;font-size:39px;color:#a0a3ab;font-weight:400;letter-spacing:0.458px;left:623.60px;top:1977.70px;">test</span>
<span class="t" style="font-family:'Liberation Sans', sans-serif;font-size:39px;color:#a0a3ab;font-weight:400;letter-spacing:0.000px;left:765.93px;top:1977.70px;transform:scaleX(0.9334);transform-origin:0 0;">java</span>
<span class="t" style="font-family:'Liberation Sans', sans-serif;font-size:39px;color:#a0a3ab;font-weight:400;letter-spacing:2.905px;left:909.00px;top:1977.70px;">com</span>
<span class="t" style="font-family:'Liberation Sans', sans-serif;font-size:39px;color:#a0a3ab;font-weight:400;letter-spacing:0.510px;left:1063.80px;top:1977.70px;">ai</span>
<span class="t" style="font-family:'Liberation Sans', sans-serif;font-size:39px;color:#a0a3ab;font-weight:400;letter-spacing:1.644px;left:1169.00px;top:1977.70px;">springboot4demo</span>
<span class="t" style="font-family:'Liberation Sans', sans-serif;font-size:39px;color:#a0a3ab;font-weight:400;letter-spacing:1.884px;left:1569.70px;top:1977.70px;">config</span>
<span class="t" style="font-family:'Liberation Sans', sans-serif;font-size:39px;color:#a0a3ab;font-weight:400;letter-spacing:-0.305px;left:1822.00px;top:1977.70px;">MyBeansRegistrarTest</span>
<span class="t" style="font-family:'Liberation Sans', sans-serif;font-size:39px;color:#a0a3ab;font-weight:400;letter-spacing:0.000px;left:2994.34px;top:1980.00px;transform:scaleX(0.9797);transform-origin:0 0;">10:29</span>
<span class="t" style="font-family:'Liberation Sans', sans-serif;font-size:39px;color:#a0a3ab;font-weight:400;letter-spacing:0.000px;left:3140.45px;top:1980.00px;transform:scaleX(0.8498);transform-origin:0 0;">CRLF</span>
<span class="t" style="font-family:'Liberation Sans', sans-serif;font-size:39px;color:#a0a3ab;font-weight:400;letter-spacing:-0.349px;left:3276.00px;top:1980.00px;">UTF-8</span>
<span class="t" style="font-family:'Liberation Sans', sans-serif;font-size:39px;color:#a0a3ab;font-weight:400;letter-spacing:0.000px;left:3434.50px;top:1980.00px;transform:scaleX(0.9673);transform-origin:0 0;">4 spaces</span>
<span class="t" style="font-family:'DejaVu Sans', sans-serif;font-size:29px;color:#b4b8bf;font-weight:700;letter-spacing:0.000px;left:3753.81px;top:535.80px;transform:scaleX(1.2300);transform-origin:0 0;">10</span>
<span class="t" style="font-family:'DejaVu Sans', sans-serif;font-size:29px;color:#b4b8bf;font-weight:700;letter-spacing:0.000px;left:3756.33px;top:567.00px;transform:scaleX(1.1656);transform-origin:0 0;">01</span>
<span class="t" style="font-family:'Liberation Sans', sans-serif;font-size:70px;color:#ced0d6;font-weight:400;font-style:italic;letter-spacing:0.000px;left:3749.95px;top:649.00px;transform:scaleX(1.0545);transform-origin:0 0;">m</span>
<span class="t" style="font-family:'DejaVu Sans Mono', 'Liberation Mono', monospace;font-size:62px;color:#b4b8bf;font-weight:700;letter-spacing:0.000px;left:3744.19px;top:945.00px;transform:scaleX(0.9376);transform-origin:0 0;">01</span>
<div class="r" style="left:540px;top:337px;width:915.5px;height:511px;box-sizing:border-box;border:10.5px solid #f64b46;border-radius:15px"></div>
<div class="r" style="left:835px;top:1719.7px;width:1670.3px;height:183.3px;box-sizing:border-box;border:10.4px solid #f64b46;border-radius:15px"></div>
<svg class="i" style="left:0;top:0" width="3840" height="2040" viewBox="0 0 3840 2040"><path d="M1218.7 903.8 L1231.9 901.2 L1377.9 1612 L1339.3 1620 Z" fill="#f64b46"/><path d="M1322.5 1625.8 Q1314.0 1614.7 1327.8 1612.1 L1387.2 1600.8 Q1400.0 1598.4 1396.5 1610.9 L1378.3 1676.5 Q1373.8 1692.9 1363.5 1679.4 Z" fill="#f64b46"/></svg>
</body></html>
